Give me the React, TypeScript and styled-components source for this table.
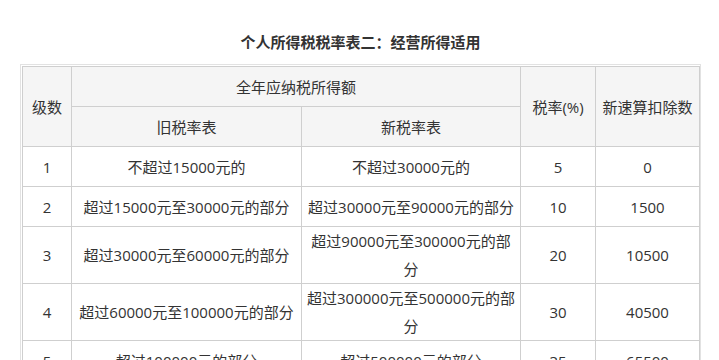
import React from "react";
import styled, { createGlobalStyle, css } from "styled-components";

const Global = createGlobalStyle`
  html, body { margin: 0; padding: 0; background: #fff; }
  body { font-family: "Open Sans", "Noto Sans CJK SC", sans-serif; color: #333; }
`;

const Page = styled.div`
  padding: 32px 0 0 20px;
  width: 681px;
`;

const Title = styled.h3`
  margin: 0 0 12px;
  text-align: center;
  font-size: 15px;
  line-height: 20px;
  font-weight: bold;
  color: #333;
`;

const Frame = styled.div`
  border: 1px solid #e2e2e2;
  padding: 1px;
  width: 677px;
`;

const Table = styled.table`
  border-collapse: collapse;
  table-layout: fixed;
  width: 677px;
  font-size: 15px;
`;

const Col = styled.col<{ $w: number }>`
  width: ${(p) => p.$w}px;
`;

const cellBase = css`
  border: 1px solid #cfcfcf;
  text-align: center;
  vertical-align: middle;
  height: 39px;
  padding: 0 2px;
  line-height: 28px;
  color: #333;
  word-break: break-all;
`;

const HeadCell = styled.th`
  ${cellBase}
  background: #f5f5f5;
  font-weight: normal;
`;

const Cell = styled.td`
  ${cellBase}
  background: #fff;
`;

const colWidths = [49, 230, 219, 75, 104];

const rows = [
  ["1", "不超过15000元的", "不超过30000元的", "5", "0"],
  ["2", "超过15000元至30000元的部分", "超过30000元至90000元的部分", "10", "1500"],
  ["3", "超过30000元至60000元的部分", "超过90000元至300000元的部分", "20", "10500"],
  ["4", "超过60000元至100000元的部分", "超过300000元至500000元的部分", "30", "40500"],
  ["5", "超过100000元的部分", "超过500000元的部分", "35", "65500"],
];

export default function App() {
  return (
    <>
      <Global />
      <Page>
        <Title>个人所得税税率表二：经营所得适用</Title>
        <Frame>
          <Table>
            <colgroup>
              {colWidths.map((w, i) => (
                <Col key={i} $w={w} />
              ))}
            </colgroup>
            <thead>
              <tr>
                <HeadCell rowSpan={2}>级数</HeadCell>
                <HeadCell colSpan={2}>全年应纳税所得额</HeadCell>
                <HeadCell rowSpan={2}>税率(%)</HeadCell>
                <HeadCell rowSpan={2}>新速算扣除数</HeadCell>
              </tr>
              <tr>
                <HeadCell>旧税率表</HeadCell>
                <HeadCell>新税率表</HeadCell>
              </tr>
            </thead>
            <tbody>
              {rows.map((r) => (
                <tr key={r[0]}>
                  {r.map((c, i) => (
                    <Cell key={i}>{c}</Cell>
                  ))}
                </tr>
              ))}
            </tbody>
          </Table>
        </Frame>
      </Page>
    </>
  );
}
